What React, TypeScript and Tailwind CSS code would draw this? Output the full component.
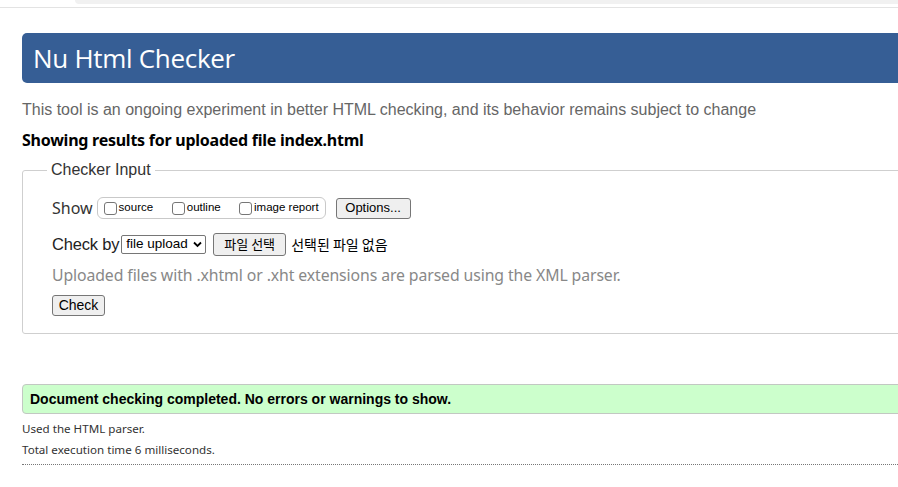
import React from "react";

const Btn = ({ children, className }: { children: React.ReactNode; className?: string }) => (
  <span
    className={
      "inline-flex items-center justify-center bg-[#efefef] border border-[#767676] rounded-[3px] text-black whitespace-nowrap " +
      (className || "")
    }
  >
    {children}
  </span>
);

const Box = () => (
  <span className="inline-block shrink-0 w-[13px] h-[13px] border border-[#767676] rounded-[3px] bg-white mr-[2px]" />
);

export default function App() {
  return (
    <div className="w-full h-[487px] overflow-hidden bg-white font-['Liberation_Sans',Arial,sans-serif] text-black">
      {/* browser chrome remnant */}
      <div className="h-[8px] border-b border-[#e3e3e3] relative">
        <div className="ml-[75px] h-[4px] bg-[#f1f1f1] rounded-bl-[6px]" />
      </div>

      <div className="ml-[22px] w-[920px]">
        <div className="mt-[25px] h-[50px] bg-[#365e95] rounded-l-[5px] flex items-center pl-[11px]">
          <h1 className="text-white text-[26px] font-['Open_Sans',sans-serif] leading-none tracking-[-0.3px]">
            Nu Html Checker
          </h1>
        </div>

        <p className="mt-[18px] text-[16px] leading-[18px] text-[#666]">
          This tool is an ongoing experiment in better HTML checking, and its behavior remains subject to change
        </p>
        <p className="mt-[12px] text-[16px] leading-[18px] font-bold font-['Noto_Sans',sans-serif] tracking-[-0.25px]">
          Showing results for uploaded file index.html
        </p>

        <div className="mt-[21px] relative border border-[#cfcfcf] rounded-[3px] h-[164px] w-[900px] pl-[29px] pt-[26px]">
          <div className="absolute left-[24px] top-[-10px] bg-white px-[4px] text-[16px] leading-[18px] text-[#333]">
            Checker Input
          </div>

          <div className="flex items-center h-[22px]">
            <span className="text-[16px] text-[#333] font-['Noto_Sans',sans-serif] mr-[4px]">Show</span>
            <span className="inline-flex items-center h-[22px] w-[229px] border border-[#c9c9c9] rounded-[6px] px-[6px] text-[11.5px] whitespace-nowrap">
              <span className="inline-flex items-center w-[69px]">
                <Box />
                source
              </span>
              <span className="inline-flex items-center w-[68px]">
                <Box />
                outline
              </span>
              <span className="inline-flex items-center">
                <Box />
                image report
              </span>
            </span>
            <Btn className="ml-[10px] h-[21px] w-[75px] text-[13px]">Options...</Btn>
          </div>

          <div className="flex items-center mt-[13px] h-[24px]">
            <span className="text-[16.5px] text-[#222] tracking-[-0.2px] mr-[2px]">Check by</span>
            <span className="inline-flex items-center h-[19px] w-[85px] border border-[#767676] rounded-[2px] pl-[4px] pr-[3px] text-[13.5px] justify-between whitespace-nowrap">
              file upload
              <svg width="9" height="7" viewBox="0 0 9 7">
                <path d="M1 1.5 L4.5 5 L8 1.5" stroke="black" strokeWidth="1.8" fill="none" />
              </svg>
            </span>
            <Btn className="ml-[7px] h-[23px] w-[73px] text-[13px] font-['Noto_Sans_CJK_KR',sans-serif]">
              파일 선택
            </Btn>
            <span className="ml-[5px] text-[14px] font-['Noto_Sans_CJK_KR',sans-serif]">선택된 파일 없음</span>
          </div>

          <p className="mt-[8px] text-[15.8px] leading-[22px] text-[#888] font-['Noto_Sans',sans-serif] tracking-[-0.1px]">
            Uploaded files with .xhtml or .xht extensions are parsed using the XML parser.
          </p>

          <Btn className="mt-[9px] h-[21px] w-[53px] text-[14px]">Check</Btn>
        </div>

        <div className="mt-[50px] h-[30px] bg-[#ccffcc] border border-[#c2c8c2] rounded-l-[4px] flex items-center pl-[7px]">
          <span className="text-[14px] font-bold">Document checking completed. No errors or warnings to show.</span>
        </div>

        <p className="mt-[8px] text-[11.6px] leading-[14px] text-[#333] font-['Noto_Sans',sans-serif]">
          Used the HTML parser.
        </p>
        <p className="mt-[7px] text-[11.6px] leading-[14px] text-[#333] font-['Noto_Sans',sans-serif]">
          Total execution time 6 milliseconds.
        </p>
        <div className="mt-[7px] border-b border-dotted border-[#777]" />
      </div>
    </div>
  );
}
